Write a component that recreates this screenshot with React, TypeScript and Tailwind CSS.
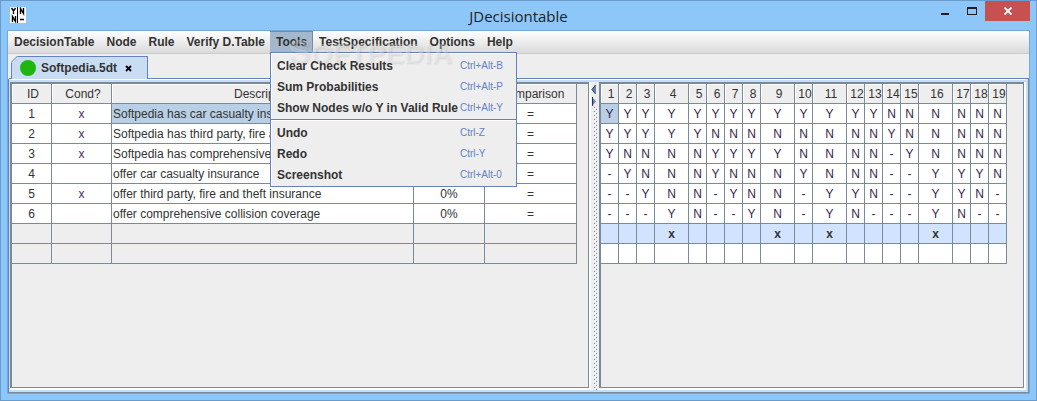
import { ReactNode } from 'react';

const menus = ['DecisionTable', 'Node', 'Rule', 'Verify D.Table', 'Tools', 'TestSpecification', 'Options', 'Help'];

const toolGroups: { label: string; keys: string }[][] = [
  [
    { label: 'Clear Check Results', keys: 'Ctrl+Alt-B' },
    { label: 'Sum Probabilities', keys: 'Ctrl+Alt-P' },
    { label: 'Show Nodes w/o Y in Valid Rule', keys: 'Ctrl+Alt-Y' },
  ],
  [
    { label: 'Undo', keys: 'Ctrl-Z' },
    { label: 'Redo', keys: 'Ctrl-Y' },
    { label: 'Screenshot', keys: 'Ctrl+Alt-0' },
  ],
];

const nodes = [
  { id: 1, cond: 'x', text: 'Softpedia has car casualty insurance' },
  { id: 2, cond: 'x', text: 'Softpedia has third party, fire and theft insurance' },
  { id: 3, cond: 'x', text: 'Softpedia has comprehensive collision coverage' },
  { id: 4, cond: '', text: 'offer car casualty insurance' },
  { id: 5, cond: 'x', text: 'offer third party, fire and theft insurance' },
  { id: 6, cond: '', text: 'offer comprehensive collision coverage' },
];

const rules = [
  'YYYYYYYYYYYYYNNNNNN',
  'YYYYYNNNNNNNNYNNNNN',
  'YNNNNYYYYNNNN-YNNNN',
  '-YNNNYNNNYNNN--YYYN',
  '--YNN-YNN-YYN--YYN-',
  '---YN--YN-YN---YN--',
];

const validRules = [4, 9, 11, 16];
const ruleNumbers = Array.from({ length: 19 }, (_, i) => i + 1);

const headCell =
  'h-5 overflow-hidden whitespace-nowrap border-b border-r border-[#7a8a99] bg-[#eeeeee] p-0 pl-[3px] font-normal shadow-[inset_1px_1px_0_#ffffff]';
const cell = 'h-5 overflow-hidden whitespace-nowrap border-b border-r border-[#7a8a99] p-0';

const AppIcon = () => (
  <svg width="16" height="16" viewBox="0 0 16 16" className="bg-white" fill="none" stroke="#000">
    <path d="M1.500 1l2 3 2-3M3.500 3.500V7M10.500 7V1.500l3 5V1M2.500 15V9.500l3 5V9M10 12.500h4" strokeWidth="1.400" />
    <path d="M7.500 0v16" />
  </svg>
);

const TitleBar = () => (
  <header className="relative flex h-[29px] shrink-0 items-center justify-center font-['Open_Sans','Noto_Sans',sans-serif] text-[15px] text-[#222]">
    <div className="absolute left-[9px] top-[6px]">
      <AppIcon />
    </div>
    <h1>JDecisiontable</h1>
    <div className="absolute right-[6px] top-0 flex h-5">
      <button aria-label="Minimize" className="flex w-[27px] items-center justify-center">
        <svg width="8" height="20" viewBox="0 0 8 20">
          <rect y="12" width="8" height="2" fill="#1e1e1e" />
        </svg>
      </button>
      <button aria-label="Maximize" className="flex w-[27px] items-center justify-center">
        <svg width="10" height="20" viewBox="0 0 10 20">
          <path d="M0 6h10v8H0zM1 8v5h8V8z" fill="#1e1e1e" fillRule="evenodd" />
        </svg>
      </button>
      <button aria-label="Close" className="flex w-[45px] items-center justify-center bg-[#c75050]">
        <svg width="8" height="8" viewBox="0 0 8 8">
          <path d="M.5 .5l7 7M7.500 .5l-7 7" stroke="#fff" strokeWidth="1.900" />
        </svg>
      </button>
    </div>
  </header>
);

const ToolsMenu = () => (
  <div
    role="menu"
    className="absolute left-0 top-[21px] z-10 w-[247px] border border-[#6382bf] bg-[#eeeeee] pb-px pt-[2px] shadow-[inset_1px_1px_0_#ffffff]"
  >
    {toolGroups.map((group, index) => (
      <div key={index} className={index > 0 ? 'mt-px border-t border-[#6382bf] pt-[2px] shadow-[inset_0_1px_0_#ffffff]' : ''}>
        {group.map((item) => (
          <button key={item.label} role="menuitem" className="flex h-[21px] w-full items-center pl-[6px] pr-[6px] text-left">
            <span className="flex-1 whitespace-nowrap font-bold">{item.label}</span>
            <span className="w-[50px] whitespace-nowrap text-[10px] text-[#6382bf]">{item.keys}</span>
          </button>
        ))}
      </div>
    ))}
  </div>
);

const MenuBar = () => (
  <nav className="relative flex h-[23px] shrink-0 border-b border-[#cccccc] bg-linear-to-b from-white to-[#dadada]">
    {menus.map((name) => (
      <div key={name} className={name === 'Tools' ? 'relative -ml-px h-[21px]' : 'relative h-[21px]'}>
        <button
          className={
            name === 'Tools'
              ? 'h-full border-r border-t border-[#7a8a99] bg-[#a3b8cc] pl-[6px] pr-[5px] font-bold'
              : 'h-full px-[6px] font-bold'
          }
        >
          {name}
        </button>
        {name === 'Tools' && <ToolsMenu />}
      </div>
    ))}
    <div
      aria-hidden="true"
      className="pointer-events-none absolute left-[280px] top-1 z-20 text-[28px] font-bold leading-8 text-white/30 [text-shadow:1px_1px_2px_rgba(0,0,0,0.1)]"
    >
      <span className="text-[34px]">S</span>OFTPEDIA
    </div>
  </nav>
);

const TabStrip = () => (
  <div className="flex h-[25px] shrink-0 items-end border-l border-[#eeeeee] bg-[#eeeeee]">
    <div className="h-px w-[2px] bg-[#6382bf]" />
    <div className="relative flex h-[23px] w-[137px] items-center border-l border-r border-t border-[#6382bf] bg-[#c8ddf2] pl-[8px]">
      <svg className="absolute -left-px -top-px" width="7" height="7" viewBox="0 0 7 7">
        <path d="M0 0h7L0 7z" fill="#eeeeee" />
        <path d="M0 6.500L6.500 0" stroke="#6382bf" />
      </svg>
      <svg width="16" height="16" viewBox="0 0 16 16">
        <circle cx="8" cy="8" r="8" fill="#1fb60f" />
      </svg>
      <button className="ml-[5px] font-bold">Softpedia.5dt</button>
      <button aria-label="Close tab" className="ml-[8px]">
        <svg width="7" height="7" viewBox="0 0 7 7">
          <path d="M1 1l5 5M6 1L1 6" stroke="#000" strokeWidth="1.800" />
        </svg>
      </button>
    </div>
    <div className="h-px flex-1 bg-[#6382bf]" />
  </div>
);

const ScrollPane = ({ children }: { children: ReactNode }) => (
  <div className="h-full bg-white pb-[2px] pr-[2px]">
    <div className="h-full overflow-hidden border-b border-l-2 border-r border-t-2 border-[#7a8a99] bg-[#eeeeee]">{children}</div>
  </div>
);

const NodeTable = () => (
  <table className="w-[565px] table-fixed border-separate border-spacing-0">
    <colgroup>
      <col className="w-[40px]" />
      <col className="w-[60px]" />
      <col className="w-[302px]" />
      <col className="w-[71px]" />
      <col className="w-[92px]" />
    </colgroup>
    <thead>
      <tr>
        <th className={headCell}>ID</th>
        <th className={headCell}>Cond?</th>
        <th className={headCell}>Description</th>
        <th className={headCell}>Probability</th>
        <th className={headCell}>Comparison</th>
      </tr>
    </thead>
    <tbody className="text-center">
      {nodes.map((node) => (
        <tr key={node.id} className="bg-white">
          <td className={cell}>{node.id}</td>
          <td className={`${cell} text-[#4a2a5a]`}>{node.cond}</td>
          <td className={`${cell} text-left ${node.id === 1 ? 'bg-[#b8cfe5]' : ''}`}>
            <span className="pl-px">{node.text}</span>
          </td>
          <td className={cell}>0%</td>
          <td className={cell}>=</td>
        </tr>
      ))}
      {[7, 8].map((row) => (
        <tr key={row}>
          <td className={cell} />
          <td className={cell} />
          <td className={cell} />
          <td className={cell} />
          <td className={cell} />
        </tr>
      ))}
    </tbody>
  </table>
);

const RuleTable = () => (
  <table className="w-[405px] table-fixed border-separate border-spacing-0 text-center">
    <colgroup>
      {ruleNumbers.map((n) => (
        <col key={n} className={validRules.includes(n) ? 'w-[34px]' : 'w-[18px]'} />
      ))}
    </colgroup>
    <thead>
      <tr>
        {ruleNumbers.map((n) => (
          <th key={n} className={headCell}>
            {n}
          </th>
        ))}
      </tr>
    </thead>
    <tbody>
      {rules.map((rule, row) => (
        <tr key={row} className="bg-white">
          {rule.split('').map((value, col) => (
            <td key={col} className={`${cell} text-[#33264d] ${row === 0 && col === 0 ? 'bg-[#b8cfe5]' : ''}`}>
              {value}
            </td>
          ))}
        </tr>
      ))}
      <tr className="bg-[#d2e3ff]">
        {ruleNumbers.map((n) => (
          <td key={n} className={`${cell} font-bold`}>
            {validRules.includes(n) ? 'x' : ''}
          </td>
        ))}
      </tr>
      <tr className="bg-white">
        {ruleNumbers.map((n) => (
          <td key={n} className={cell} />
        ))}
      </tr>
    </tbody>
  </table>
);

const Divider = () => (
  <div className="flex w-2 shrink-0 flex-col bg-[#eeeeee] pt-[3px]">
    <svg width="8" height="22" viewBox="0 0 8 22" className="shrink-0">
      <path d="M5 0v9L1 4.500z" fill="#6382bf" />
      <path d="M4.500 0L1 4.500 4.500 9" stroke="#333" fill="none" />
      <path d="M1 12v9l4-4.500z" fill="#6382bf" />
      <path d="M1.500 12v9" stroke="#333" />
    </svg>
    <svg width="8" height="100%" className="min-h-0 flex-1">
      <pattern id="bumps" width="8" height="4" patternUnits="userSpaceOnUse">
        <rect x="3" y="0" width="1" height="1" fill="#6b8199" />
        <rect x="5" y="2" width="1" height="1" fill="#6b8199" />
        <rect x="4" y="1" width="1" height="1" fill="#fff" />
        <rect x="6" y="3" width="1" height="1" fill="#fff" />
      </pattern>
      <rect width="8" height="100%" fill="url(#bumps)" />
    </svg>
  </div>
);

const App = () => {
  return (
    <div className="flex h-screen w-full flex-col border border-[#6b9bca] bg-[#8dc7fa] font-['Liberation_Sans',Arial,sans-serif] text-[12px] leading-4 text-[#333333]">
      <TitleBar />
      <main className="mx-[6px] mb-[6px] flex min-h-0 flex-1 flex-col border border-[#74a9dc]">
        <MenuBar />
        <TabStrip />
        <div className="flex min-h-0 flex-1 flex-col border-b border-l border-r border-b-[#7a8a99] border-l-[#6382bf] border-r-[#7a8a99] bg-[#c8ddf2] pb-[2px] pl-px pr-[2px]">
          <div className="mb-[2px] h-px bg-white" />
          <div className="flex min-h-0 flex-1">
            <div className="w-[581px] shrink-0">
              <ScrollPane>
                <NodeTable />
              </ScrollPane>
            </div>
            <Divider />
            <div className="min-w-0 flex-1">
              <ScrollPane>
                <RuleTable />
              </ScrollPane>
            </div>
          </div>
        </div>
      </main>
    </div>
  );
};

export default App;
